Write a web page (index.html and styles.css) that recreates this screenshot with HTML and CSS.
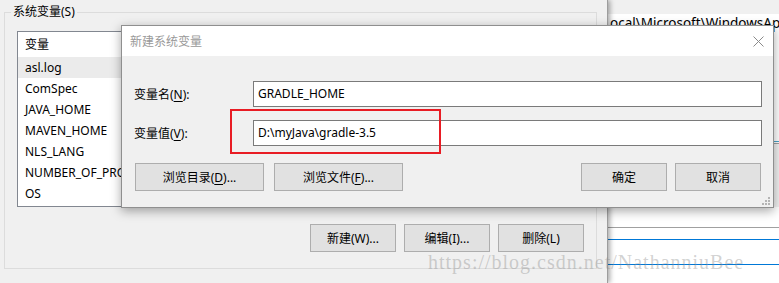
FILE: index.html
```html
<!DOCTYPE html>
<html lang="zh-CN">

<head>
    <meta charset="UTF-8">
    <meta name="viewport" content="width=device-width, initial-scale=1.0">
    <title>新建系统变量</title>
    <link rel="stylesheet" href="styles.css">
</head>

<body>
    <div class="desk">
        <!-- window far behind, only its right edge shows -->
        <div class="win-behind">
            <div class="behind-strip"></div>
            <div class="behind-path">Local\Microsoft\WindowsApps</div>
            <div class="behind-fill" style="height: 109px"></div>
            <div class="line-blue line-teal"></div>
            <div class="behind-fill" style="height: 1px"></div>
            <div class="line-gray"></div>
            <div class="behind-gray"></div>
            <div class="behind-fill" style="height: 20px"></div>
            <div class="line-gray"></div>
            <div class="behind-fill" style="height: 11px"></div>
            <div class="line-blue"></div>
            <div class="behind-fill" style="height: 24px"></div>
            <div class="line-blue"></div>
        </div>

        <!-- environment variables dialog -->
        <div class="env-dialog">
            <fieldset class="group">
                <legend>系统变量(S)</legend>
                <div class="var-list">
                    <div class="list-head">变量</div>
                    <div class="list-row selected">asl.log</div>
                    <div class="list-row">ComSpec</div>
                    <div class="list-row">JAVA_HOME</div>
                    <div class="list-row">MAVEN_HOME</div>
                    <div class="list-row">NLS_LANG</div>
                    <div class="list-row">NUMBER_OF_PROCESSORS</div>
                    <div class="list-row">OS</div>
                </div>
                <div class="group-buttons">
                    <button class="btn">新建(W)...</button>
                    <button class="btn">编辑(I)...</button>
                    <button class="btn">删除(L)</button>
                </div>
            </fieldset>
        </div>

        <!-- new system variable dialog -->
        <div class="new-dialog">
            <div class="title-bar">
                <span class="title">新建系统变量</span>
                <svg class="close-icon" width="11" height="11" viewBox="0 0 11 11">
                    <path d="M0.5 0.5 L10.5 10.5 M10.5 0.5 L0.5 10.5" stroke="#8a8a8a" stroke-width="1" fill="none" />
                </svg>
            </div>
            <div class="dialog-body">
                <div class="field-row">
                    <label class="field-label">变量名(<u>N</u>):</label>
                    <div class="text-box">GRADLE_HOME</div>
                </div>
                <div class="field-row second">
                    <label class="field-label">变量值(<u>V</u>):</label>
                    <div class="text-box">D:\myJava\gradle-3.5</div>
                </div>
                <div class="button-row">
                    <div class="button-group wide">
                        <button class="btn btn-wide">浏览目录(<u>D</u>)...</button>
                        <button class="btn btn-wide">浏览文件(<u>F</u>)...</button>
                    </div>
                    <div class="button-group">
                        <button class="btn">确定</button>
                        <button class="btn">取消</button>
                    </div>
                </div>
            </div>
            <svg class="grip" width="8" height="8" viewBox="0 0 8 8">
                <rect x="6" y="0" width="2" height="2" fill="#b4b4b4" />
                <rect x="3" y="3" width="2" height="2" fill="#b4b4b4" />
                <rect x="6" y="3" width="2" height="2" fill="#b4b4b4" />
                <rect x="0" y="6" width="2" height="2" fill="#b4b4b4" />
                <rect x="3" y="6" width="2" height="2" fill="#b4b4b4" />
                <rect x="6" y="6" width="2" height="2" fill="#b4b4b4" />
            </svg>
        </div>

        <div class="mark-box"></div>
        <div class="watermark">https://blog.csdn.net/NathanniuBee</div>
    </div>
</body>

</html>
```

FILE: styles.css
```css
* {
    box-sizing: border-box;
    margin: 0;
    padding: 0;
}

body {
    width: 779px;
    height: 283px;
    overflow: hidden;
    background: #f0f0f0;
    color: #000;
    font-family: 'Noto Sans', 'Noto Sans CJK SC', sans-serif;
    font-size: 12px;
}

.desk {
    position: relative;
    width: 779px;
    height: 283px;
    overflow: hidden;
}

u {
    text-decoration: underline;
    text-underline-offset: 2px;
}

/* ---------- window behind ---------- */

.win-behind {
    position: absolute;
    left: 596px;
    top: 0;
    width: 183px;
    height: 283px;
    background: #fff;
}

.behind-strip {
    height: 14px;
    background: #f0f0f0;
}

.behind-path {
    height: 18px;
    line-height: 18px;
    padding-left: 7px;
    font-size: 13.5px;
    white-space: nowrap;
    background: #fff;
}

.behind-fill {
    background: #fff;
}

.behind-gray {
    height: 63px;
    background: #f0f0f0;
}

.line-blue {
    height: 1px;
    background: #0078d7;
}

.line-teal {
    background: #4aa3c8;
}

.line-gray {
    height: 1px;
    background: #a0a0a0;
}

/* ---------- environment variables dialog ---------- */

.env-dialog {
    position: absolute;
    left: 0;
    top: 0;
    width: 608px;
    height: 283px;
    background: #f0f0f0;
    border-right: 1px solid #9d9d9d;
    box-shadow: 2px 0 5px rgba(0, 0, 0, 0.35);
}

.group {
    margin: 4px 0 0 4px;
    width: 593px;
    height: 265px;
    min-width: 0;
    border: 1px solid #dcdcdc;
    padding: 0 12px 0 12px;
}

.group legend {
    margin-left: -6px;
    padding: 0 2px;
    line-height: 16px;
    color: #000;
}

.var-list {
    margin-top: 11px;
    width: 567px;
    height: 176px;
    border: 1px solid #828790;
    background: #fff;
    overflow: hidden;
}

.list-head {
    height: 25px;
    line-height: 25px;
    padding-left: 7px;
}

.list-row {
    height: 21px;
    line-height: 21px;
    padding-left: 7px;
    white-space: nowrap;
}

.list-row.selected {
    background: #ebebeb;
}

.group-buttons {
    display: flex;
    justify-content: flex-end;
    gap: 8px;
    margin-top: 17px;
    width: 567px;
}

.btn {
    width: 86px;
    height: 28px;
    background: #e1e1e1;
    border: 1px solid #adadad;
    font-family: inherit;
    font-size: 12px;
    color: #000;
}

/* ---------- new variable dialog ---------- */

.new-dialog {
    position: absolute;
    left: 121px;
    top: 25px;
    width: 653px;
    height: 183px;
    border: 1px solid #8f8f8f;
    box-shadow: 0 3px 10px rgba(0, 0, 0, 0.35);
    display: flex;
    flex-direction: column;
}

.title-bar {
    height: 30px;
    background: #fff;
    padding: 0 9px 0 8px;

    display: flex;
    align-items: center;
    justify-content: space-between;
}

.title {
    color: #999;
}

.dialog-body {
    flex: 1;
    background: #f0f0f0;
    padding: 25px 11px 0 12px;
}

.field-row {
    display: flex;
    align-items: center;
    height: 26px;
}

.field-row.second {
    margin-top: 13px;
}

.field-label {
    width: 119px;
}

.text-box {
    flex: 1;
    height: 26px;
    line-height: 24px;
    padding-left: 4px;
    background: #fff;
    border: 1px solid #7a7a7a;
}

.button-row {
    margin-top: 17px;
    padding: 0 1px;

    display: flex;
    justify-content: space-between;
}

.button-group {
    display: flex;
    gap: 8px;
}

.button-group.wide {
    gap: 10px;
}

.btn-wide {
    width: 129px;
}

.grip {
    position: absolute;
    right: 3px;
    bottom: 2px;
}

/* ---------- annotations ---------- */

.mark-box {
    position: absolute;
    left: 230px;
    top: 109px;
    width: 211px;
    height: 45px;
    border: 2px solid #e81c24;
}

.watermark {
    position: absolute;
    left: 428px;
    top: 250px;
    font-family: 'Liberation Serif', serif;
    font-style: normal;
    font-size: 20px;
    letter-spacing: 1px;
    line-height: 24px;
    color: rgba(140, 140, 140, 0.4);
    white-space: nowrap;
    pointer-events: none;
}
```
